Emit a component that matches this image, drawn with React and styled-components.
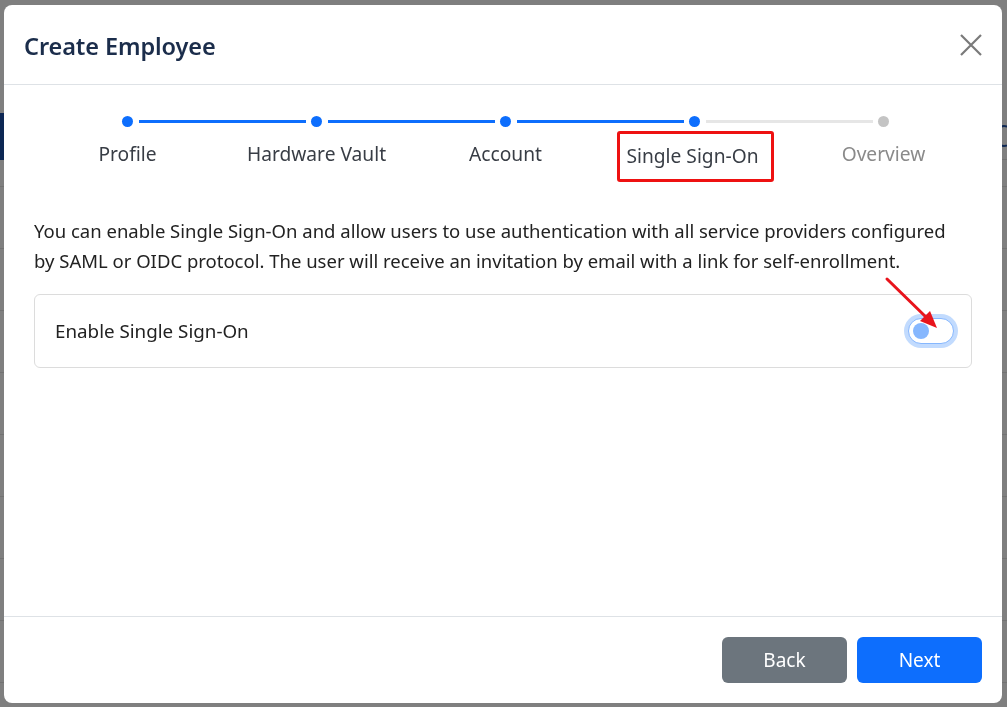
import React from "react";
import styled, { createGlobalStyle } from "styled-components";

const Global = createGlobalStyle`
  html, body { margin: 0; padding: 0; height: 100%; }
  body { font-family: "Noto Sans", "Open Sans", sans-serif; background: #fff; overflow: hidden; }
  * { box-sizing: border-box; }
`;

const Page = styled.div`
  height: 707px;
  display: flex;
  flex-direction: column;
  padding-top: 113px;
`;

const PageRow = styled.div`
  height: ${(p) => p.$h || 62}px;
  border-bottom: 1px solid #e4e4e4;
  display: flex;
  align-items: center;
  justify-content: space-between;
  font-size: 18px;
  color: #111;
`;

const SideTab = styled.div`
  width: 40px;
  height: 47px;
  background: #1a4fa8;
`;

const Ring = styled.div`
  width: 22px;
  height: 22px;
  border-radius: 50%;
  border: 2px solid #1a4fa8;
  margin-right: -8px;
`;

const Overlay = styled.div`
  position: fixed;
  inset: 0;
  background: rgba(0, 0, 0, 0.5);
  padding: 5px 5px 4px 4px;
  display: flex;
`;

const Modal = styled.div`
  flex: 1;
  background: #fff;
  border-radius: 8px;
  display: flex;
  flex-direction: column;
  overflow: hidden;
`;

const Header = styled.div`
  height: 80px;
  flex-shrink: 0;
  border-bottom: 1px solid #dee2e6;
  display: flex;
  align-items: center;
  justify-content: space-between;
  padding: 0 18px 0 20px;
`;

const Title = styled.h1`
  margin: 0;
  font-size: 23.5px;
  font-weight: 600;
  color: #1b2d4b;
  letter-spacing: -0.1px;
  position: relative;
  top: 1px;
`;

const CloseBtn = styled.button`
  border: 0;
  background: none;
  padding: 0;
  width: 26px;
  height: 26px;
  display: flex;
  align-items: center;
  justify-content: center;
  cursor: pointer;
`;

const Body = styled.div`
  flex: 1;
  padding: 30px 30px 0 30px;
`;

const Stepper = styled.div`
  display: flex;
  margin: 0 -6px 0 -1px;
`;

const Step = styled.div`
  flex: 1;
  display: flex;
  flex-direction: column;
  align-items: center;
`;

const DotRow = styled.div`
  height: 12px;
  width: 100%;
  display: flex;
  align-items: center;
  justify-content: center;
  position: relative;
`;

const Dot = styled.span`
  width: 11px;
  height: 11px;
  border-radius: 50%;
  background: ${(p) => (p.$done ? "#0d6efd" : "#c4c4c4")};
  position: relative;
  z-index: 1;
`;

const Connector = styled.span`
  position: absolute;
  top: 5px;
  left: calc(50% + 11px);
  width: calc(100% - 22px);
  height: 3px;
  background: ${(p) => (p.$done ? "#0d6efd" : "#e6e6e6")};
`;

const LabelSlot = styled.div`
  height: 50px;
  margin-top: 8px;
  display: flex;
  align-items: flex-start;
  justify-content: center;
`;

const StepLabel = styled.div`
  font-size: 19.2px;
  line-height: 1.2;
  color: ${(p) => (p.$muted ? "#8a8a8a" : "#383d45")};
  border: 3px solid ${(p) => (p.$marked ? "#ee1111" : "transparent")};
  border-radius: 3px;
  padding: ${(p) => (p.$marked ? "10px 12px 12px 6px" : "4px 6px")};
  margin-top: ${(p) => (p.$marked ? "-4px" : "0")};
  margin-left: ${(p) => (p.$marked ? "2px" : "0")};
`;

const Description = styled.p`
  margin: 31px 0 0 0;
  max-width: 925px;
  font-size: 18.5px;
  line-height: 30px;
  color: #222;
`;

const Card = styled.div`
  margin-top: 18px;
  height: 74px;
  border: 1px solid #dcdcdc;
  border-radius: 6px;
  display: flex;
  align-items: center;
  justify-content: space-between;
  padding: 0 17px 0 20px;
  font-size: 18.8px;
  color: #222;
  position: relative;
`;

const Switch = styled.span`
  width: 46px;
  height: 26px;
  border-radius: 13px;
  border: 1.5px solid #86b7fe;
  background: #fff;
  box-shadow: 0 0 0 4px rgba(13, 110, 253, 0.25);
  display: flex;
  align-items: center;
  padding-left: 4px;
`;

const Knob = styled.span`
  width: 16px;
  height: 16px;
  border-radius: 50%;
  background: #86b7fe;
`;

const Arrow = styled.svg`
  position: absolute;
  right: 21px;
  top: -22px;
  pointer-events: none;
`;

const Footer = styled.div`
  height: 87px;
  flex-shrink: 0;
  border-top: 1px solid #dee2e6;
  display: flex;
  align-items: center;
  justify-content: flex-end;
  gap: 10px;
  padding: 0 20px 0 0;
`;

const Button = styled.button`
  width: 125px;
  height: 46px;
  border: 0;
  border-radius: 6px;
  color: #fff;
  font-family: inherit;
  font-size: 19px;
  background: ${(p) => (p.$primary ? "#0d6efd" : "#6c757d")};
  cursor: pointer;
`;

const steps = [
  { label: "Profile", done: true },
  { label: "Hardware Vault", done: true },
  { label: "Account", done: true },
  { label: "Single Sign-On", done: true, marked: true },
  { label: "Overview", done: false, muted: true },
];

export default function App() {
  return (
    <>
      <Global />
      <Page>
        <PageRow $h={47}>
          <SideTab />
          <Ring />
        </PageRow>
        <PageRow $h={27} />
        {[0, 1, 2, 3, 4, 5, 6, 7].map((i) => (
          <PageRow key={i} />
        ))}
      </Page>
      <Overlay>
        <Modal>
          <Header>
            <Title>Create Employee</Title>
            <CloseBtn aria-label="Close">
              <svg width="22" height="22" viewBox="0 0 22 22">
                <path d="M1 1 L21 21 M21 1 L1 21" stroke="#7a7a7a" strokeWidth="2.2" />
              </svg>
            </CloseBtn>
          </Header>
          <Body>
            <Stepper>
              {steps.map((s, i) => (
                <Step key={s.label}>
                  <DotRow>
                    <Dot $done={s.done} />
                    {i < steps.length - 1 && <Connector $done={steps[i + 1].done} />}
                  </DotRow>
                  <LabelSlot>
                    <StepLabel $muted={s.muted} $marked={s.marked}>
                      {s.label}
                    </StepLabel>
                  </LabelSlot>
                </Step>
              ))}
            </Stepper>
            <Description>
              You can enable Single Sign-On and allow users to use authentication with all service providers configured
              by SAML or OIDC protocol. The user will receive an invitation by email with a link for self-enrollment.
            </Description>
            <Card>
              <span>Enable Single Sign-On</span>
              <Switch>
                <Knob />
              </Switch>
              <Arrow width="70" height="63" viewBox="0 0 70 63">
                <line x1="7" y1="6" x2="48" y2="46" stroke="#e8141c" strokeWidth="3" strokeLinecap="round" />
                <polygon points="57,55 40,48 50,38" fill="#e8141c" />
              </Arrow>
            </Card>
          </Body>
          <Footer>
            <Button>Back</Button>
            <Button $primary>Next</Button>
          </Footer>
        </Modal>
      </Overlay>
    </>
  );
}
